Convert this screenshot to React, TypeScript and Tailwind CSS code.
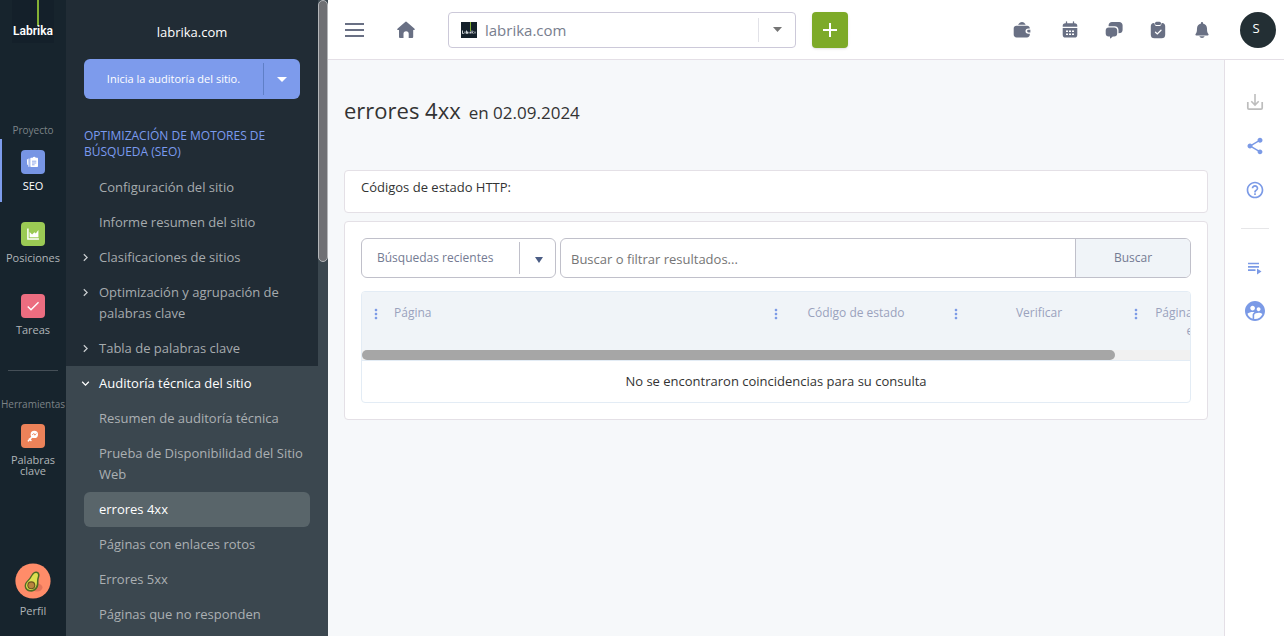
import type { ReactNode } from "react";
import {
  MdCheck,
  MdChevronRight,
  MdExpandMore,
  MdHelpOutline,
  MdMoreVert,
  MdShare,
  MdSupervisedUserCircle,
} from "react-icons/md";

function Logo({ className }: { className: string }) {
  return (
    <svg viewBox="0 0 42 43" className={className} role="img" aria-label="Labrika">
      <rect width="42" height="43" fill="#14202a" />
      <rect x="25" y="0" width="2" height="26" fill="#84b135" />
      <text
        x="21"
        y="35"
        textAnchor="middle"
        fill="#ffffff"
        fontSize="12"
        fontWeight="600"
        fontFamily="'Roboto', sans-serif"
      >
        Labrika
      </text>
    </svg>
  );
}

function Favicon() {
  return (
    <svg viewBox="0 0 16 16" className="size-4 shrink-0" aria-hidden="true">
      <rect width="16" height="16" fill="#14202a" />
      <rect x="9" y="0" width="1" height="9" fill="#84b135" />
      <path
        d="M1.5 8.5v3h1.2M4 9.5v2M5.5 8.5v3h1v-2M8 9.8v1.7M9.5 9.5v2M11 8.5v3M12.3 9.5l-1 1 1 1M14 9.6v1.9"
        stroke="#dfe4e8"
        strokeWidth="0.9"
        fill="none"
      />
    </svg>
  );
}

function Caret({ className }: { className: string }) {
  return (
    <svg viewBox="0 0 10 6" preserveAspectRatio="none" className={className} aria-hidden="true">
      <path d="M0 0h10L5 6z" fill="currentColor" />
    </svg>
  );
}

function PapersIcon() {
  return (
    <svg viewBox="0 0 14 14" className="size-3.5" aria-hidden="true">
      <path
        d="M5.3 2.8h1.400a1.600 1.600 0 0 1 3 0h1.300c.6 0 1 .4 1 1v7.300c0 .6-.4 1-1 1H5.300c-.6 0-1-.4-1-1V3.800c0-.6.4-1 1-1z"
        fill="#fff"
      />
      <path d="M1.400 4.200l.3 5.600M2.900 3.600v8.200" stroke="#fff" strokeWidth="1" />
      <path d="M6 6.200h4.300M6 8h4.300M6 9.800h2.600" stroke="#7795e4" strokeWidth="0.8" />
    </svg>
  );
}

function AreaIcon() {
  return (
    <svg viewBox="0 0 14 14" className="size-3.5" aria-hidden="true">
      <path d="M1.9 1.5v10.4h11" stroke="#fff" strokeWidth="1.5" fill="none" />
      <path d="M3.6 10.3V5l2.5 2.5L8.4 5.2l1.4 1.2L12.4 3v7.3z" fill="#fff" />
    </svg>
  );
}

function KeyIcon() {
  return (
    <svg viewBox="0 0 14 14" className="size-3.5" aria-hidden="true">
      <circle cx="8.3" cy="5.4" r="3.7" fill="#fff" />
      <path d="M6 8l-3.6 3.8M3.4 10l1.5 1.5" stroke="#fff" strokeWidth="1.6" strokeLinecap="round" />
      <path d="M6.2 6l1.6-1.6 1 1.8 1.5-1.7" stroke="#ec8259" strokeWidth="0.9" fill="none" />
    </svg>
  );
}

function AvocadoAvatar() {
  return (
    <svg viewBox="0 0 36 36" className="size-9" aria-hidden="true">
      <circle cx="18" cy="18" r="17.6" fill="#ff8c69" />
      <ellipse cx="22" cy="24.5" rx="5.5" ry="4" fill="#e3745a" />
      <path
        d="M21.3 8.5c3 .2 4 3 2.9 5.8-.8 2.1-.7 3.800-.7 6 0 4.900-3.200 8.400-7.300 8.400-4.500 0-7-3.100-6.500-6.700.4-3.100 2.700-4.600 4.400-6.600 2.500-3 3.400-7.100 7.200-6.900z"
        fill="#4e6b24"
      />
      <path
        d="M21 10c2 .1 2.400 1.900 1.700 4-.8 2.200-.7 3.900-.8 6-.2 4-2.600 7-5.800 7-3.400 0-5.400-2.300-5-5 .3-2.400 2.500-3.800 4.200-6 2.300-2.900 3-6.100 5.700-6z"
        fill="#dde04f"
      />
      <circle cx="16.300" cy="22.300" r="4" fill="#6b5320" />
      <circle cx="16.300" cy="22.300" r="2.900" fill="#b9833f" />
    </svg>
  );
}

function HomeIcon() {
  return (
    <svg viewBox="0 0 18 18" className="h-[18px] w-[18px]" aria-hidden="true">
      <path
        d="M8.200.9a1.200 1.200 0 0 1 1.600 0l7.500 6.700c.8.700.4 1.500-.3 1.500h-.8v6.700c0 .8-.5 1.300-1.300 1.300h-3.200v-4.300a2.600 2.600 0 0 0-5.200 0v4.300H3.300c-.8 0-1.300-.5-1.300-1.300V9.100H1c-.8 0-1.100-.8-.3-1.500z"
        fill="currentColor"
      />
    </svg>
  );
}

function WalletIcon() {
  return (
    <svg viewBox="0 0 18 18" className="h-[18px] w-[18px]" aria-hidden="true">
      <path d="M5 3.800C6 1.900 7.500.9 9 .9s3 1 3.700 2.900z" fill="currentColor" />
      <path
        d="M3.500 4.800h10.600c1.600 0 2.700 1 2.700 2.600h-1.600a2.700 2.700 0 0 0 0 5.400h1.600v.7c0 1.800-1.100 2.900-2.900 2.900H3.600C1.800 16.400.7 15.300.7 13.500V7.600c0-1.800 1.100-2.800 2.800-2.800z"
        fill="currentColor"
      />
      <path d="M15.500 8.700h1.900v2.800h-1.900a1.400 1.400 0 0 1 0-2.800z" fill="currentColor" />
    </svg>
  );
}

function CalendarIcon() {
  return (
    <svg viewBox="0 0 18 18" className="h-[18px] w-[18px]" aria-hidden="true">
      <path d="M5.500.8v3M12.500.8v3" stroke="currentColor" strokeWidth="1.300" strokeLinecap="round" />
      <path d="M4.300 2.200h9.400a2.600 2.600 0 0 1 2.600 2.600v.9H1.700v-.9a2.600 2.600 0 0 1 2.600-2.600z" fill="currentColor" />
      <path d="M1.700 7h14.600v6.700a2.900 2.900 0 0 1-2.900 2.900H4.600a2.900 2.900 0 0 1-2.900-2.900z" fill="currentColor" />
      <path d="M5 9.500h2v1.500H5zm3 0h2v1.500H8zm3 0h2v1.500h-2zM5 12.500h2V14H5zm3 0h2V14H8zm3 0h2V14h-2z" fill="#fff" />
    </svg>
  );
}

function ChatIcon() {
  return (
    <svg viewBox="0 0 18 18" className="h-[18px] w-[18px]" aria-hidden="true">
      <path
        d="M7 .9h7.200c2 0 3.400 1.400 3.400 3.400v4.400c0 1.700-.9 3-2.500 3.400l-1.600.2V9c0-2.200-1.600-3.800-3.800-3.800H3.600v-.9C3.600 2.300 5 .9 7 .9z"
        fill="currentColor"
      />
      <path
        d="M3.700 6.400h5.500c1.800 0 3 1.200 3 3v3.200c0 1.800-1.200 3-3 3H7.800l-2 1.700c-.4.300-.8.100-.8-.4v-1.300H3.700c-1.800 0-3-1.200-3-3V9.400c0-1.800 1.200-3 3-3z"
        fill="currentColor"
      />
    </svg>
  );
}

function TaskIcon() {
  return (
    <svg viewBox="0 0 18 18" className="h-[18px] w-[18px]" aria-hidden="true">
      <path
        d="M4.800 1.900h.6c.1 2 1 3.100 2.600 3.100h2c1.600 0 2.500-1.100 2.600-3.100h.6c1.900.2 3 1.500 3 3.400v8.400c0 2.300-1.300 3.600-3.600 3.600H5.400c-2.300 0-3.600-1.300-3.600-3.600V5.300c0-1.900 1.100-3.200 3-3.400z"
        fill="currentColor"
      />
      <rect x="6" y="0.800" width="6" height="3.100" rx="1.500" fill="currentColor" />
      <path d="M6.500 11.200l1.800 1.700 3.700-3.600" stroke="#fff" strokeWidth="1.300" fill="none" strokeLinecap="round" />
    </svg>
  );
}

function BellIcon() {
  return (
    <svg viewBox="0 0 18 18" className="h-[18px] w-[18px]" aria-hidden="true">
      <path
        d="M9 1c.6 0 1 .4 1 1v.5c2.500.6 4 2.500 4 5.100 0 3 .4 4.200 1.400 5.400.4.600.2 1.500-.7 1.500H3.300c-.9 0-1.100-.9-.7-1.500C3.600 11.800 4 10.600 4 7.600c0-2.600 1.500-4.500 4-5.100V2c0-.6.4-1 1-1z"
        fill="currentColor"
      />
      <path d="M6.400 15.200h5.200c-.4 1-1.400 1.700-2.600 1.700s-2.200-.7-2.600-1.700z" fill="currentColor" />
    </svg>
  );
}

function DownloadIcon() {
  return (
    <svg viewBox="0 0 18 18" className="h-[18px] w-[18px]" fill="none" stroke="currentColor" aria-hidden="true">
      <path d="M1.800 9v6c0 .7.400 1.200 1.200 1.200h12c.8 0 1.200-.5 1.200-1.200V9" strokeWidth="1.700" />
      <path d="M9 1v10.500M5.300 8.300L9 12l3.700-3.700" strokeWidth="1.600" />
    </svg>
  );
}

function PlaylistIcon() {
  return (
    <svg viewBox="0 0 16 16" className="size-4" aria-hidden="true">
      <path d="M1 3.500h11M1 6.800h11M1 10.100h7.500" stroke="currentColor" strokeWidth="1.700" />
      <path d="M10 8.500l4.500 3-4.500 3z" fill="currentColor" />
    </svg>
  );
}

function RailItem({
  label,
  tile,
  icon,
  active = false,
}: {
  label: string;
  tile: string;
  icon: ReactNode;
  active?: boolean;
}) {
  return (
    <a
      href="#"
      className={`flex min-h-[63px] flex-col items-center border-l-2 pr-0.5 pt-[11px] text-center text-[11px] leading-[11px] ${
        active ? "border-[#7d9cec] text-white" : "border-transparent text-[#b0b5b8]"
      }`}
    >
      <span className={`mb-1.5 flex size-6 items-center justify-center rounded ${tile}`}>{icon}</span>
      {label}
    </a>
  );
}

function Rail() {
  return (
    <nav aria-label="Secciones" className="flex w-[66px] shrink-0 flex-col bg-[#17242d]">
      <a href="#" className="mx-auto">
        <Logo className="h-[43px] w-[42px]" />
      </a>
      <p className="mb-px mt-20 text-center text-[10px] leading-[15px] text-[#7c8387]">Proyecto</p>
      <div className="flex flex-col gap-[9px]">
        <RailItem label="SEO" tile="bg-[#7795e4]" icon={<PapersIcon />} active />
        <RailItem label="Posiciones" tile="bg-[#9bca54]" icon={<AreaIcon />} />
        <RailItem label="Tareas" tile="bg-[#ec6d80]" icon={<MdCheck className="size-4 text-white" />} />
      </div>
      <hr className="mx-2 mt-6 border-[#454f57]" />
      <p className="mt-[26px] text-center text-[10px] leading-[15px] text-[#7c8387]">Herramientas</p>
      <div className="mt-px px-1">
        <RailItem label="Palabras clave" tile="bg-[#ec8259]" icon={<KeyIcon />} />
      </div>
      <a href="#" className="mb-[17px] mt-auto flex flex-col items-center gap-1 text-[11px] leading-4 text-[#b0b5b8]">
        <AvocadoAvatar />
        Perfil
      </a>
    </nav>
  );
}

type MenuEntry = { label: string; nested?: boolean };

const MAIN_ENTRIES: MenuEntry[] = [
  { label: "Configuración del sitio" },
  { label: "Informe resumen del sitio" },
  { label: "Clasificaciones de sitios", nested: true },
  { label: "Optimización y agrupación de palabras clave", nested: true },
  { label: "Tabla de palabras clave", nested: true },
];

const AUDIT_ENTRIES = [
  "Resumen de auditoría técnica",
  "Prueba de Disponibilidad del Sitio Web",
  "errores 4xx",
  "Páginas con enlaces rotos",
  "Errores 5xx",
  "Páginas que no responden",
];

function SidePanel() {
  return (
    <aside className="flex w-[262px] shrink-0 overflow-hidden bg-[#3b474f] text-[13px] leading-[21px]">
      <div className="min-w-0 flex-1">
        <div className="bg-[#212c35]">
          <p className="pb-4 pt-[22px] text-center text-white">labrika.com</p>
          <div className="mx-[18px] flex h-10 items-center rounded-md bg-[#7d9bec] text-white">
            <button className="h-full flex-1 pb-0.5 text-[11px]">Inicia la auditoría del sitio.</button>
            <span className="h-8 w-px bg-[#5f7fc7]" />
            <button aria-label="Más opciones" className="flex h-full w-9 items-center justify-center">
              <Caret className="h-[5px] w-2.5" />
            </button>
          </div>
          <h2 className="mx-[18px] pb-[10px] pt-[29px] text-xs uppercase leading-4 text-[#7b9bf0]">
            Optimización de motores de búsqueda (SEO)
          </h2>
          <ul>
            {MAIN_ENTRIES.map((entry) => (
              <li key={entry.label}>
                <a href="#" className="flex py-[7px] pl-3 pr-6 text-[#a6abae]">
                  <span className="w-[21px] shrink-0 pt-[3px]">
                    {entry.nested && <MdChevronRight className="size-[15px] text-[#c8cccf]" />}
                  </span>
                  {entry.label}
                </a>
              </li>
            ))}
          </ul>
        </div>
        <a href="#" className="flex py-[7px] pl-3 text-white">
          <span className="w-[21px] shrink-0 pt-[3px]">
            <MdExpandMore className="size-[15px]" />
          </span>
          Auditoría técnica del sitio
        </a>
        <ul className="ml-[18px] mr-2">
          {AUDIT_ENTRIES.map((label) => (
            <li key={label}>
              <a
                href="#"
                className={`block rounded-md py-[7px] pl-[15px] pr-1 ${
                  label === "errores 4xx" ? "bg-[#59656a] text-white" : "text-[#abb0b3]"
                }`}
              >
                {label}
              </a>
            </li>
          ))}
        </ul>
      </div>
      <div className="w-[10px] shrink-0 bg-[#3b474f]">
        <div className="h-[262px] rounded-full border border-[#b4b6b9] bg-[#6f7074]" />
      </div>
    </aside>
  );
}

function TopBar() {
  return (
    <header className="flex h-[60px] shrink-0 items-center border-b border-[#e4dfe6] bg-white pl-[17px] pr-2 text-[#697084]">
      <button aria-label="Menú" className="flex w-[19px] flex-col gap-1">
        <span className="h-0.5 bg-current" />
        <span className="h-0.5 bg-current" />
        <span className="h-0.5 bg-current" />
      </button>
      <a href="#" aria-label="Inicio" className="ml-[33px]">
        <HomeIcon />
      </a>
      <div className="ml-[33px] flex h-9 w-[348px] items-center rounded border border-[#ccc9d9] pl-3">
        <Favicon />
        <select
          aria-label="Proyecto"
          className="ml-2 h-full flex-1 appearance-none bg-transparent pt-px text-[15px] text-[#787e8e] outline-none"
        >
          <option>labrika.com</option>
        </select>
        <span className="h-6 w-px bg-[#e2e2e8]" />
        <span className="flex w-9 justify-center text-[#757575]">
          <Caret className="h-[5px] w-[9px]" />
        </span>
      </div>
      <button
        aria-label="Añadir proyecto"
        className="ml-4 flex size-9 items-center justify-center rounded bg-[#7daa28] text-white shadow"
      >
        <svg viewBox="0 0 14 14" className="size-3.5" aria-hidden="true">
          <path d="M7 0v14M0 7h14" stroke="currentColor" strokeWidth="2" />
        </svg>
      </button>
      <div className="ml-auto flex items-center gap-[26px]">
        <button aria-label="Saldo" className="mr-1">
          <WalletIcon />
        </button>
        <button aria-label="Calendario">
          <CalendarIcon />
        </button>
        <button aria-label="Mensajes">
          <ChatIcon />
        </button>
        <button aria-label="Tareas">
          <TaskIcon />
        </button>
        <button aria-label="Notificaciones" className="mr-[3px]">
          <BellIcon />
        </button>
        <button className="flex size-9 items-center justify-center rounded-full bg-[#232f34] pb-0.5 pr-1 text-[13px] text-white">
          S
        </button>
      </div>
    </header>
  );
}

function ToolBar() {
  return (
    <aside className="flex w-[60px] shrink-0 flex-col items-center border-l border-[#e4dfe6] bg-white pt-[33px] text-[#7b9ae6]">
      <button aria-label="Descargar" className="text-[#bdbdbd]">
        <DownloadIcon />
      </button>
      <button aria-label="Compartir" className="mt-[25px]">
        <MdShare className="size-5" />
      </button>
      <button aria-label="Ayuda" className="mt-6">
        <MdHelpOutline className="size-5" />
      </button>
      <hr className="mb-[31px] mt-7 w-7 border-[#e6e6e8]" />
      <button aria-label="Lista de tareas">
        <PlaylistIcon />
      </button>
      <button aria-label="Usuarios" className="mt-[23px]">
        <MdSupervisedUserCircle className="size-6" />
      </button>
    </aside>
  );
}

const COLUMNS = [
  { label: "Página", width: "w-[400px]", text: "pl-2.5 text-left" },
  { label: "Código de estado", width: "w-[180px]", text: "pr-3.5 text-center" },
  { label: "Verificar", width: "w-[180px]", text: "pr-2 text-center" },
  { label: "Páginas con enlaces externos", width: "w-[152px]", text: "pl-1 text-center" },
];

function ResultsTable() {
  return (
    <div className="mt-[13px] overflow-hidden rounded border border-[#e3ecf5]">
      <div className="overflow-hidden bg-[#f0f4f8]">
        <table className="w-[912px] table-fixed border-collapse">
          <thead>
            <tr className="h-[58px] align-top">
              {COLUMNS.map((column) => (
                <th key={column.label} scope="col" className={`${column.width} p-0 pt-3 font-normal`}>
                  <div className="flex items-start">
                    <MdMoreVert className="ml-1.5 mt-0.5 size-4 shrink-0 text-[#7b9ae6]" />
                    <span className={`flex-1 text-xs leading-[18px] text-[#9aa2bd] ${column.text}`}>
                      {column.label}
                    </span>
                  </div>
                </th>
              ))}
            </tr>
          </thead>
        </table>
      </div>
      <div className="h-[10px] bg-[#f1f1f1]">
        <div className="h-full w-[91%] rounded-full bg-[#a6a6a6]" />
      </div>
      <p className="border-t border-[#e3ecf5] pb-[11px] pt-[10px] text-center text-[13px] leading-5 text-[#333]">
        No se encontraron coincidencias para su consulta
      </p>
    </div>
  );
}

function Content() {
  return (
    <main className="min-w-0 flex-1 bg-[#f6f8fa] px-4 text-[#333]">
      <h1 className="flex items-baseline gap-2 pb-11 pt-[34px] text-[22px] leading-8">
        errores 4xx <span className="text-[17px] leading-6">en 02.09.2024</span>
      </h1>
      <section className="rounded-sm border border-[#e4e0e6] bg-white px-4 pb-[15px] pt-1.5 text-[13px] leading-5">
        Códigos de estado HTTP:
      </section>
      <section className="mt-2 rounded-sm border border-[#e4e0e6] bg-white p-4">
        <div className="flex gap-1">
          <div className="flex h-10 w-[195px] shrink-0 items-center rounded-md border border-[#c0c0ca]">
            <select
              aria-label="Búsquedas recientes"
              className="h-full min-w-0 flex-1 appearance-none bg-transparent pl-[15px] text-xs text-[#747b93] outline-none"
            >
              <option>Búsquedas recientes</option>
            </select>
            <span className="h-8 w-px bg-[#c0c0ca]" />
            <span className="flex w-[35px] justify-center pl-0.5 pt-1 text-[#4b5d85]">
              <Caret className="h-1.5 w-2" />
            </span>
          </div>
          <form className="flex h-10 min-w-0 flex-1 overflow-hidden rounded-md border border-[#c0c0ca]">
            <input
              type="text"
              aria-label="Buscar o filtrar resultados"
              placeholder="Buscar o filtrar resultados..."
              className="min-w-0 flex-1 px-2.5 pt-1 text-[13px] outline-none placeholder:text-[#757575]"
            />
            <button type="button" className="w-[115px] border-l border-[#c0c0ca] bg-[#f0f4f8] text-xs text-[#747b93]">
              Buscar
            </button>
          </form>
        </div>
        <ResultsTable />
      </section>
    </main>
  );
}

export default function App() {
  return (
    <div className="flex h-screen overflow-hidden font-['Open_Sans','Noto_Sans',sans-serif]">
      <Rail />
      <SidePanel />
      <div className="flex min-w-0 flex-1 flex-col">
        <TopBar />
        <div className="flex flex-1">
          <Content />
          <ToolBar />
        </div>
      </div>
    </div>
  );
}
